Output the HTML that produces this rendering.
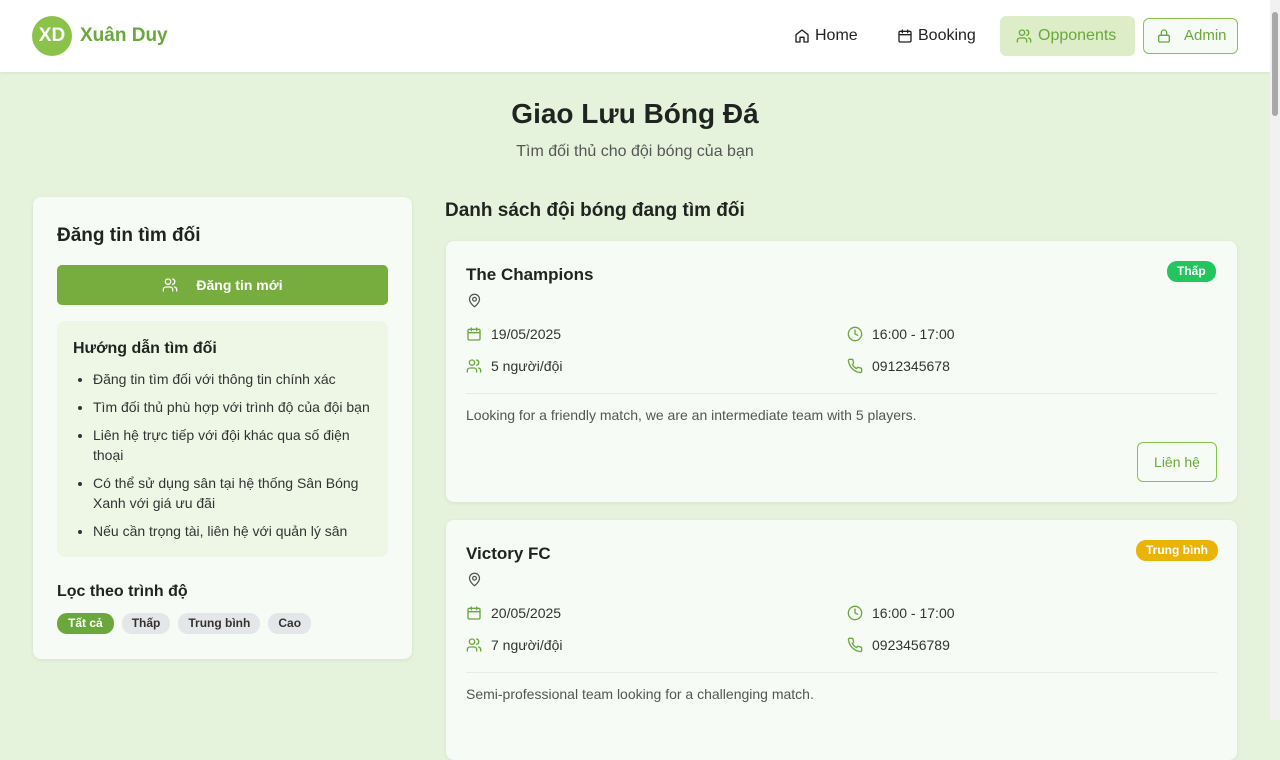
<!DOCTYPE html>
<html><head><meta charset="utf-8"><style>
*{box-sizing:border-box;margin:0;padding:0}
body{width:1280px;height:720px;overflow:hidden;background:#e6f3dc;font-family:"Liberation Sans","DejaVu Sans",sans-serif;color:#1f2421;position:relative}
.a{position:absolute}
svg{fill:none;stroke:currentColor;stroke-width:2;stroke-linecap:round;stroke-linejoin:round}
.hdr{left:0;top:0;width:1270px;height:72px;background:#fff;box-shadow:0 1px 3px rgba(0,0,0,.08)}
.card{background:#f6fbf5;border-radius:8px;box-shadow:0 1px 4px rgba(0,0,0,.08)}
.pill{display:inline-block;border-radius:10px;font-size:12px;font-weight:bold;padding:3px 10px;height:21px}
.info{font-size:14px;color:#333;display:flex;align-items:center;gap:9px}
.info svg{color:#6aa83d}
li{margin-bottom:8px}
</style></head><body>
<div class="a hdr"></div>
<div class="a" style="left:32px;top:16px;width:40px;height:40px;border-radius:50%;background:#8bc34a;color:#fff;font-weight:bold;font-size:19px;text-align:center;line-height:40px">XD</div>
<div class="a" style="left:80px;top:25px;font-size:19px;font-weight:bold;color:#6aa83d">Xuân Duy</div>
<div class="a info" style="left:794px;top:27px;font-size:16px;color:#222;gap:5px"><svg width="16" height="16" viewBox="0 0 24 24" style="color:#222"><path d="M3 10l9-7 9 7v11h-6v-7H9v7H3z"/></svg>Home</div>
<div class="a info" style="left:897px;top:27px;font-size:16px;color:#222;gap:5px"><svg width="16" height="16" viewBox="0 0 24 24" style="color:#222"><rect x="3" y="5" width="18" height="16" rx="2"/><path d="M3 10h18M8 3v4M16 3v4"/></svg>Booking</div>
<div class="a" style="left:1000px;top:16px;width:135px;height:40px;border-radius:6px;background:#dcedc8"></div>
<div class="a info" style="left:1016px;top:27px;font-size:16px;color:#6aa83d;gap:6px"><svg width="16" height="16" viewBox="0 0 24 24"><circle cx="9" cy="7" r="4"/><path d="M2 21v-2a4 4 0 014-4h6a4 4 0 014 4v2M16 3.1a4 4 0 010 7.8M22 21v-2a4 4 0 00-3-3.9"/></svg>Opponents</div>
<div class="a" style="left:1143px;top:18px;width:95px;height:36px;border:1px solid #8bc34a;border-radius:6px;background:#f6fbf5"></div>
<div class="a info" style="left:1156px;top:27px;font-size:15px;color:#6aa83d;gap:12px"><svg width="16" height="16" viewBox="0 0 24 24"><rect x="4" y="11" width="16" height="10" rx="2"/><path d="M8 11V7a4 4 0 018 0v4"/></svg>Admin</div>
<div class="a" style="left:1270px;top:0;width:10px;height:720px;background:#f1f1f1"></div>
<div class="a" style="left:1272px;top:12px;width:6px;height:104px;background:#a8a8a8;border-radius:3px"></div>

<div class="a" style="left:0;width:1270px;top:98px;text-align:center;font-size:28px;font-weight:bold">Giao Lưu Bóng Đá</div>
<div class="a" style="left:0;width:1270px;top:143px;text-align:center;font-size:16px;color:#555">Tìm đối thủ cho đội bóng của bạn</div>

<div class="a card" style="left:33px;top:197px;width:379px;height:462px"></div>
<div class="a" style="left:57px;top:225px;font-size:19px;font-weight:bold">Đăng tin tìm đối</div>
<div class="a" style="left:57px;top:265px;width:331px;height:40px;background:#76ad3e;border-radius:5px;color:#fff;font-size:14px;font-weight:bold;display:flex;align-items:center;justify-content:center;gap:18px"><svg width="16" height="16" viewBox="0 0 24 24"><circle cx="9" cy="7" r="4"/><path d="M2 21v-2a4 4 0 014-4h6a4 4 0 014 4v2M16 3.1a4 4 0 010 7.8M22 21v-2a4 4 0 00-3-3.9"/></svg>Đăng tin mới</div>
<div class="a" style="left:57px;top:321px;width:331px;height:236px;background:#eef6e6;border-radius:8px"></div>
<div class="a" style="left:73px;top:340px;font-size:16px;font-weight:bold">Hướng dẫn tìm đối</div>
<ul class="a" style="left:93px;top:369px;width:280px;font-size:14px;line-height:20px;color:#333">
<li>Đăng tin tìm đối với thông tin chính xác</li>
<li>Tìm đối thủ phù hợp với trình độ của đội bạn</li>
<li>Liên hệ trực tiếp với đội khác qua số điện thoại</li>
<li>Có thể sử dụng sân tại hệ thống Sân Bóng Xanh với giá ưu đãi</li>
<li>Nếu cần trọng tài, liên hệ với quản lý sân</li>
</ul>
<div class="a" style="left:57px;top:583px;font-size:16px;font-weight:bold">Lọc theo trình độ</div>
<div class="a" style="left:57px;top:613px;display:flex;gap:8px">
<span class="pill" style="background:#6aa83d;color:#fff;padding:3px 11px">Tất cả</span>
<span class="pill" style="background:#e4e6ea;color:#333">Thấp</span>
<span class="pill" style="background:#e4e6ea;color:#333">Trung bình</span>
<span class="pill" style="background:#e4e6ea;color:#333">Cao</span></div>

<div class="a" style="left:445px;top:200px;font-size:19px;font-weight:bold">Danh sách đội bóng đang tìm đối</div>

<div class="a card" style="left:446px;top:241px;width:791px;height:261px"></div>
<div class="a" style="left:466px;top:265px;font-size:17px;font-weight:bold">The Champions</div>
<span class="a pill" style="left:1167px;top:261px;background:#22c55e;color:#fff">Thấp</span>
<svg class="a" style="left:467px;top:293px;color:#555" width="15" height="15" viewBox="0 0 24 24"><path d="M20 10c0 6-8 12-8 12S4 16 4 10a8 8 0 0116 0z"/><circle cx="12" cy="10" r="3"/></svg>
<div class="a info" style="left:466px;top:326px"><svg width="16" height="16" viewBox="0 0 24 24"><rect x="3" y="5" width="18" height="16" rx="2"/><path d="M3 10h18M8 3v4M16 3v4"/></svg>19/05/2025</div>
<div class="a info" style="left:847px;top:326px"><svg width="16" height="16" viewBox="0 0 24 24"><circle cx="12" cy="12" r="10"/><path d="M12 6v6l4 2"/></svg>16:00 - 17:00</div>
<div class="a info" style="left:466px;top:358px"><svg width="16" height="16" viewBox="0 0 24 24"><circle cx="9" cy="7" r="4"/><path d="M2 21v-2a4 4 0 014-4h6a4 4 0 014 4v2M16 3.1a4 4 0 010 7.8M22 21v-2a4 4 0 00-3-3.9"/></svg>5 người/đội</div>
<div class="a info" style="left:847px;top:358px"><svg width="16" height="16" viewBox="0 0 24 24"><path d="M22 16.9v3a2 2 0 01-2.2 2 19.8 19.8 0 01-8.6-3.1 19.5 19.5 0 01-6-6A19.8 19.8 0 012.1 4.2 2 2 0 014.1 2h3a2 2 0 012 1.7c.1 1 .4 1.9.7 2.8a2 2 0 01-.5 2.1L8 9.9a16 16 0 006 6l1.3-1.3a2 2 0 012.1-.4c.9.3 1.8.6 2.8.7a2 2 0 011.7 2z"/></svg>0912345678</div>
<div class="a" style="left:466px;top:393px;width:751px;height:1px;background:#e6ebe4"></div>
<div class="a" style="left:466px;top:407px;font-size:14px;color:#555">Looking for a friendly match, we are an intermediate team with 5 players.</div>
<div class="a" style="left:1137px;top:442px;width:80px;height:40px;border:1px solid #8bc34a;border-radius:6px;color:#6aa83d;font-size:14px;text-align:center;line-height:38px">Liên hệ</div>

<div class="a card" style="left:446px;top:520px;width:791px;height:240px"></div>
<div class="a" style="left:466px;top:544px;font-size:17px;font-weight:bold">Victory FC</div>
<span class="a pill" style="left:1136px;top:540px;background:#eab308;color:#fff">Trung bình</span>
<svg class="a" style="left:467px;top:572px;color:#555" width="15" height="15" viewBox="0 0 24 24"><path d="M20 10c0 6-8 12-8 12S4 16 4 10a8 8 0 0116 0z"/><circle cx="12" cy="10" r="3"/></svg>
<div class="a info" style="left:466px;top:605px"><svg width="16" height="16" viewBox="0 0 24 24"><rect x="3" y="5" width="18" height="16" rx="2"/><path d="M3 10h18M8 3v4M16 3v4"/></svg>20/05/2025</div>
<div class="a info" style="left:847px;top:605px"><svg width="16" height="16" viewBox="0 0 24 24"><circle cx="12" cy="12" r="10"/><path d="M12 6v6l4 2"/></svg>16:00 - 17:00</div>
<div class="a info" style="left:466px;top:637px"><svg width="16" height="16" viewBox="0 0 24 24"><circle cx="9" cy="7" r="4"/><path d="M2 21v-2a4 4 0 014-4h6a4 4 0 014 4v2M16 3.1a4 4 0 010 7.8M22 21v-2a4 4 0 00-3-3.9"/></svg>7 người/đội</div>
<div class="a info" style="left:847px;top:637px"><svg width="16" height="16" viewBox="0 0 24 24"><path d="M22 16.9v3a2 2 0 01-2.2 2 19.8 19.8 0 01-8.6-3.1 19.5 19.5 0 01-6-6A19.8 19.8 0 012.1 4.2 2 2 0 014.1 2h3a2 2 0 012 1.7c.1 1 .4 1.9.7 2.8a2 2 0 01-.5 2.1L8 9.9a16 16 0 006 6l1.3-1.3a2 2 0 012.1-.4c.9.3 1.8.6 2.8.7a2 2 0 011.7 2z"/></svg>0923456789</div>
<div class="a" style="left:466px;top:672px;width:751px;height:1px;background:#e6ebe4"></div>
<div class="a" style="left:466px;top:686px;font-size:14px;color:#555">Semi-professional team looking for a challenging match.</div>
</body></html>
